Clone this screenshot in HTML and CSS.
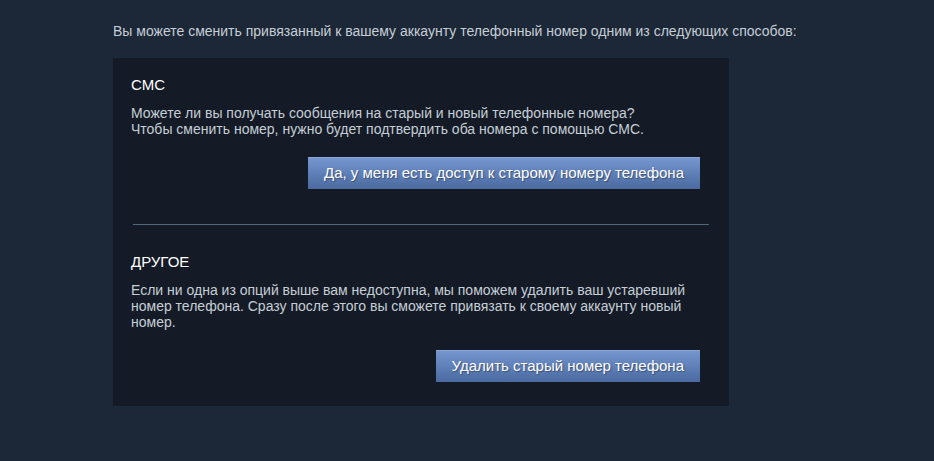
FILE: index.html
```html
<!DOCTYPE html>
<html lang="ru">
<head>
    <meta charset="UTF-8">
    <meta name="viewport" content="width=device-width, initial-scale=1.0">
    <title>Смена номера телефона</title>
    <link rel="stylesheet" href="styles.css">
</head>
<body>
    <div class="page">
        <p class="intro">Вы можете сменить привязанный к вашему аккаунту телефонный номер одним из следующих способов:</p>

        <div class="panel">
            <div class="option">
                <div class="option-title">СМС</div>
                <p class="option-text">Можете ли вы получать сообщения на старый и новый телефонные номера?<br>Чтобы сменить номер, нужно будет подтвердить оба номера с помощью СМС.</p>
                <div class="option-actions">
                    <a class="btn-blue" href="#">Да, у меня есть доступ к старому номеру телефона</a>
                </div>
            </div>

            <div class="divider"></div>

            <div class="option">
                <div class="option-title">ДРУГОЕ</div>
                <p class="option-text">Если ни одна из опций выше вам недоступна, мы поможем удалить ваш устаревший номер телефона. Сразу после этого вы сможете привязать к своему аккаунту новый номер.</p>
                <div class="option-actions">
                    <a class="btn-blue" href="#">Удалить старый номер телефона</a>
                </div>
            </div>
        </div>
    </div>
</body>
</html>
```

FILE: styles.css
```css
body {
    margin: 0;
    background-color: #1c2737;
    font-family: Arial, "Liberation Sans", Helvetica, sans-serif;
    color: #c6ced6;
}

.page {
    padding: 22px 0 0 113px;
}

.intro {
    margin: 0 0 18px 0;
    font-size: 14px;
    line-height: 18px;
    color: #c6ced6;
}

.panel {
    width: 569px;
    padding: 18px 29px 24px 18px;
    background-color: #141b26;
}

.option-title {
    font-size: 15px;
    line-height: 18px;
    color: #ffffff;
}

.option-text {
    margin: 11px 0 0 0;
    font-size: 14px;
    line-height: 16px;
    color: #c6ced6;
}

.option-actions {
    display: flex;
    justify-content: flex-end;
    margin-top: 20px;
}

.btn-blue {
    display: block;
    height: 32px;
    line-height: 32px;
    padding: 0 16px;
    font-size: 15px;
    color: #ffffff;
    text-decoration: none;
    text-shadow: 1px 1px 1px rgba(0,0,0,0.35);
    background: linear-gradient(to bottom, #7797d0 0%, #5f80b8 50%, #4a6aa0 100%);
    box-shadow: inset 0 1px 0 rgba(255,255,255,0.15);
}

.btn-blue:hover {
    background: linear-gradient(to bottom, #86a6de 0%, #5878ae 100%);
}

.divider {
    height: 1px;
    margin: 35px -9px 28px 2px;
    background-color: #4d6874;
}
```
